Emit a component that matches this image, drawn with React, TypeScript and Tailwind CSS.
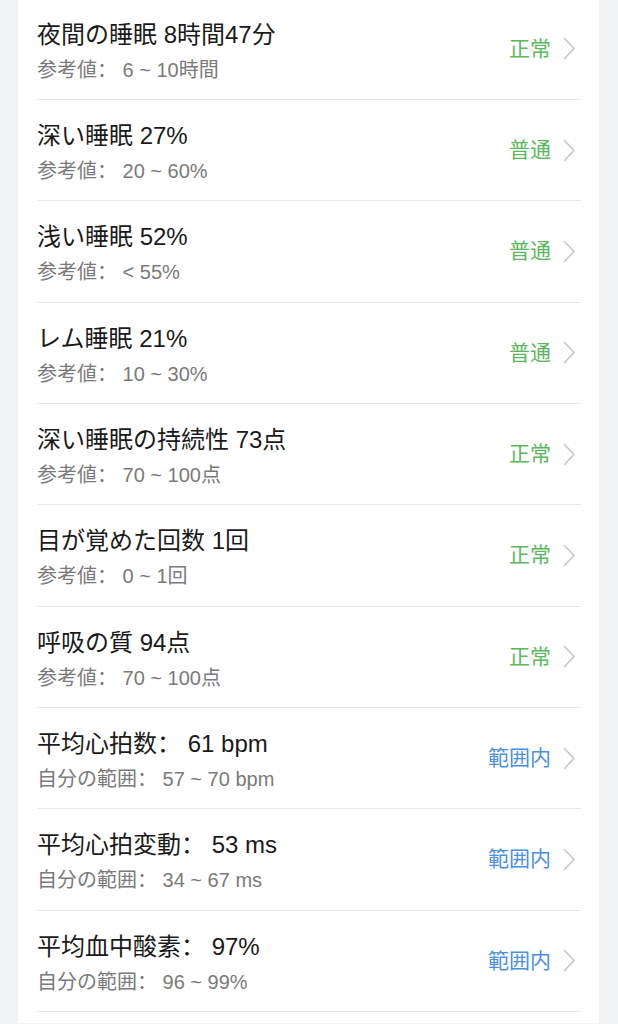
import React from 'react';

type Row = {
  title: string;
  sub: string;
  status: string;
  tone: 'green' | 'blue';
};

const rows: Row[] = [
  { title: '夜間の睡眠 8時間47分', sub: '参考値： 6 ~ 10時間', status: '正常', tone: 'green' },
  { title: '深い睡眠 27%', sub: '参考値： 20 ~ 60%', status: '普通', tone: 'green' },
  { title: '浅い睡眠 52%', sub: '参考値： < 55%', status: '普通', tone: 'green' },
  { title: 'レム睡眠 21%', sub: '参考値： 10 ~ 30%', status: '普通', tone: 'green' },
  { title: '深い睡眠の持続性 73点', sub: '参考値： 70 ~ 100点', status: '正常', tone: 'green' },
  { title: '目が覚めた回数 1回', sub: '参考値： 0 ~ 1回', status: '正常', tone: 'green' },
  { title: '呼吸の質 94点', sub: '参考値： 70 ~ 100点', status: '正常', tone: 'green' },
  { title: '平均心拍数： 61 bpm', sub: '自分の範囲： 57 ~ 70 bpm', status: '範囲内', tone: 'blue' },
  { title: '平均心拍変動： 53 ms', sub: '自分の範囲： 34 ~ 67 ms', status: '範囲内', tone: 'blue' },
  { title: '平均血中酸素： 97%', sub: '自分の範囲： 96 ~ 99%', status: '範囲内', tone: 'blue' },
];

const Chevron = () => (
  <svg width="13" height="23" viewBox="0 0 13 23" fill="none" className="shrink-0">
    <path d="M1.5 1.5 L11 11.5 L1.5 21.5" stroke="#c7c7cc" strokeWidth="1.6" strokeLinecap="round" strokeLinejoin="round" />
  </svg>
);

const MetricRow: React.FC<{ row: Row }> = ({ row }) => (
  <div className="flex h-[101.33px] items-start justify-between border-b border-[#e8e8ea] pr-[5px]">
    <div className="flex flex-col gap-[6px] pt-[21px]">
      <div className="text-[24px] leading-[30px] text-[#1a1a1a] whitespace-pre">{row.title}</div>
      <div className="text-[20px] leading-[28px] text-[#7a7a7a] whitespace-pre">{row.sub}</div>
    </div>
    <div className="flex h-full items-center gap-[12px]">
      <span
        className={
          row.tone === 'green'
            ? 'text-[21px] leading-[28px] text-[#5bb75e]'
            : 'text-[21px] leading-[28px] text-[#4a8fe0]'
        }
      >
        {row.status}
      </span>
      <Chevron />
    </div>
  </div>
);

export default function App() {
  return (
    <div
      className="h-[1024px] w-full overflow-hidden bg-[#f2f3f5] pl-[18px] pr-[19px]"
      style={{ fontFamily: '"Liberation Sans", "Noto Sans CJK SC", sans-serif' }}
    >
      <div className="h-full bg-white pl-[19px] pr-[18px]">
        <div className="-mt-[1.33px]">
          {rows.map((row) => (
            <MetricRow key={row.title} row={row} />
          ))}
        </div>
      </div>
    </div>
  );
}
